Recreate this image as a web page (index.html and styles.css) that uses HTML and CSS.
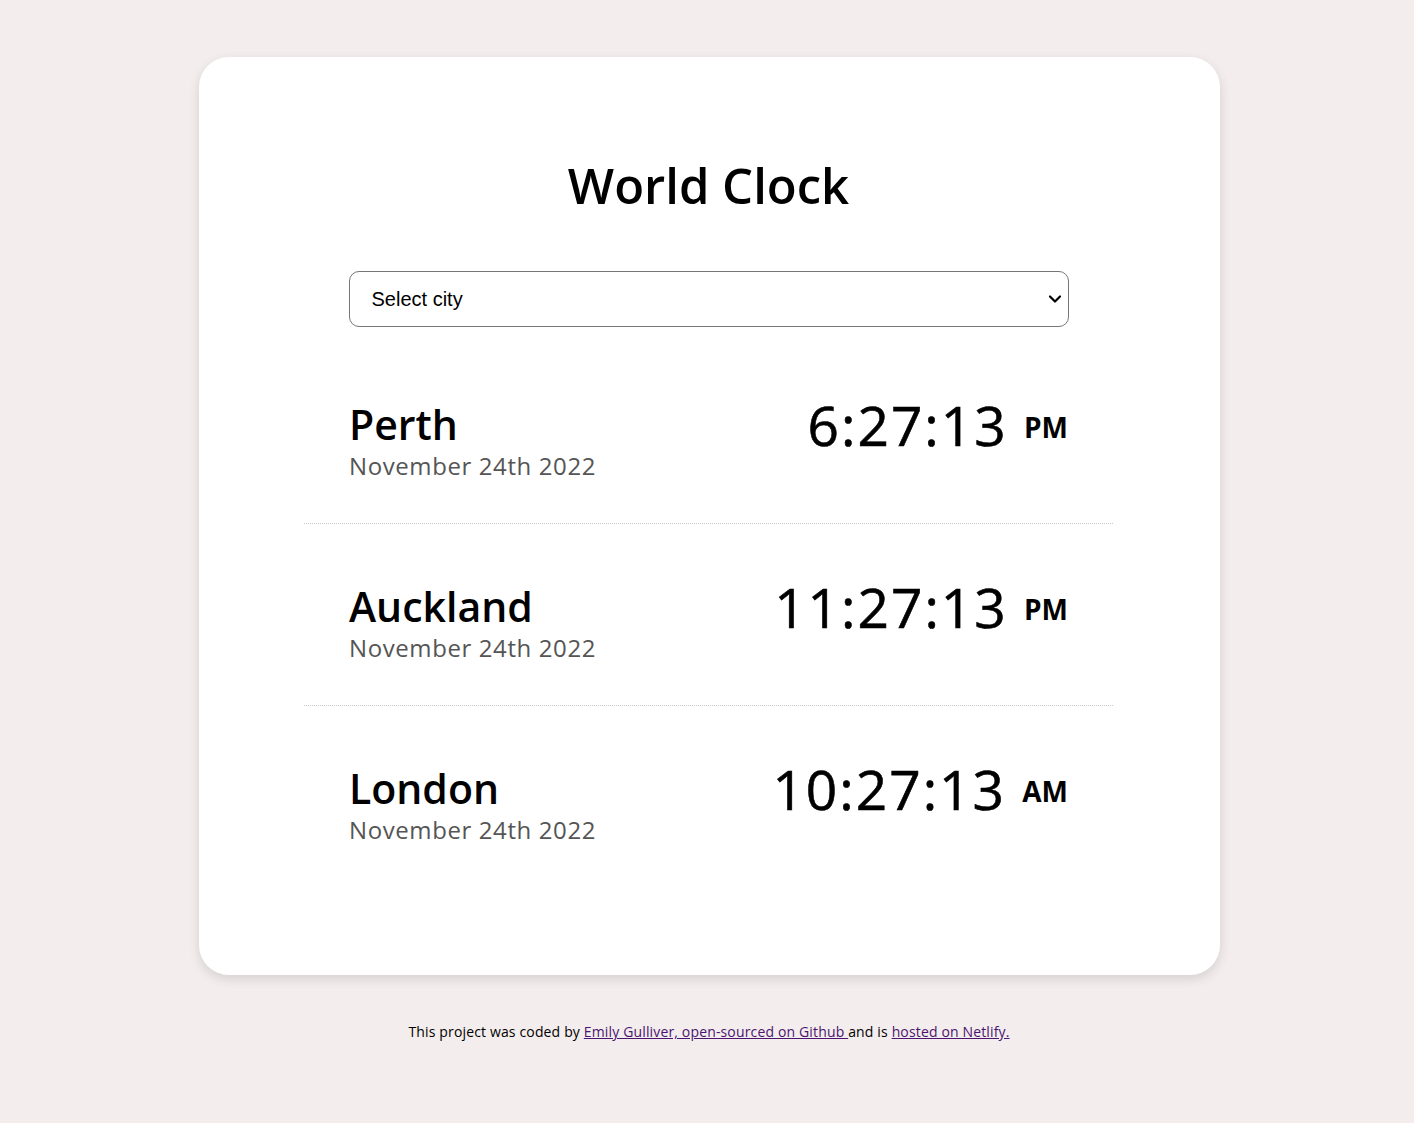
FILE: index.html
```html
<!DOCTYPE html>
<html lang="en">
<head>
<meta charset="utf-8">
<title>World Clock</title>
<link rel="stylesheet" href="styles.css">
</head>
<body>
<div class="card">
  <h1 class="title">World Clock</h1>
  <div class="select-wrap">
    <div class="select-box">
      <select class="city-select">
        <option>Select city</option>
      </select>
      <svg class="chevron" width="14" height="10" viewBox="0 0 14 10" aria-hidden="true">
        <path d="M2 2.5 L7 7.5 L12 2.5" fill="none" stroke="#000" stroke-width="2.2" stroke-linecap="round" stroke-linejoin="round"/>
      </svg>
    </div>
  </div>
  <div class="cities">
    <div class="city">
      <div class="city-info">
        <h2 class="city-name">Perth</h2>
        <div class="city-date">November 24th 2022</div>
      </div>
      <div class="city-time">6:27:13 <small class="ampm">PM</small></div>
    </div>
    <div class="city">
      <div class="city-info">
        <h2 class="city-name">Auckland</h2>
        <div class="city-date">November 24th 2022</div>
      </div>
      <div class="city-time">11:27:13 <small class="ampm">PM</small></div>
    </div>
    <div class="city">
      <div class="city-info">
        <h2 class="city-name">London</h2>
        <div class="city-date">November 24th 2022</div>
      </div>
      <div class="city-time">10:27:13 <small class="ampm">AM</small></div>
    </div>
  </div>
</div>
<footer class="footer">
  This project was coded by <a href="#">Emily Gulliver, open-sourced on Github </a>and is <a href="#">hosted on Netlify.</a>
</footer>
</body>
</html>
```
FILE: styles.css
```css
* { box-sizing: border-box; }
html, body { margin: 0; padding: 0; }
body {
  background: #f3eded;
  font-family: "Open Sans", "Noto Sans", sans-serif;
  color: #000;
  padding-top: 57px;
}
.card {
  width: 1021px;
  margin-left: 199px;
  background: #fff;
  border-radius: 30px;
  box-shadow: 0 4px 12px rgba(0, 0, 0, 0.12);
  padding: 90px 107px 92px 105px;
  height: 918px;
}
.title {
  margin: 0;
  text-align: center;
  font-size: 49px;
  font-weight: 600;
  line-height: 76px;
}
.select-wrap {
  display: flex;
  justify-content: center;
  margin-top: 48px;
}
.select-box {
  position: relative;
  width: 720px;
  height: 56px;
}
.city-select {
  appearance: none;
  -webkit-appearance: none;
  width: 100%;
  height: 100%;
  border: 1px solid #767676;
  border-radius: 10px;
  background: #fff;
  font-family: "Liberation Sans", Arial, sans-serif;
  font-size: 20px;
  padding: 0 22px;
  color: #000;
}
.chevron {
  position: absolute;
  right: 7px;
  top: 23px;
  pointer-events: none;
}
.cities {
  margin-top: 15px;
}
.city {
  display: flex;
  justify-content: space-between;
  align-items: center;
  padding: 42px 45px 30px;
  height: 182px;
  border-bottom: 1px dotted #c8c8c8;
}
.city:last-child { border-bottom: none; }
.city-name {
  margin: 0;
  font-size: 41px;
  font-weight: 600;
  line-height: 54px;
}
.city-date {
  font-size: 24px;
  color: #555;
  letter-spacing: 0.6px;
  line-height: 30px;
}
.city-time {
  font-size: 55px;
  font-weight: 500;
  line-height: 70px;
  margin-top: -26px;
  letter-spacing: 2px;
  -webkit-text-stroke: 0.6px #000;
}
.ampm {
  font-size: 28px;
  font-weight: 700;
  letter-spacing: 0;
  vertical-align: 0.3em;
  -webkit-text-stroke: 0;
}
.footer {
  text-align: center;
  font-size: 14px;
  letter-spacing: 0.15px;
  margin-top: 47px;
  padding-left: 4px;
}
.footer a { color: #4b1470; }
```
